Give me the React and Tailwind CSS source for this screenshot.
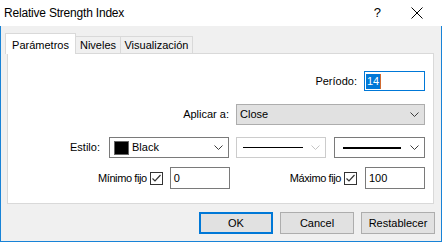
import React from "react";

function Chevron({ disabled }) {
  return (
    <svg width="9" height="6" viewBox="0 0 9 6" className="shrink-0">
      <path
        d="M0.5 0.5 L4.5 4.5 L8.5 0.5"
        fill="none"
        stroke={disabled ? "#c4c4c4" : "#3c3c3c"}
        strokeWidth="1"
      />
    </svg>
  );
}

function CheckBox() {
  return (
    <div className="w-[13px] h-[13px] border border-[#333333] bg-white flex items-center justify-center">
      <svg width="11" height="11" viewBox="0 0 11 11">
        <path d="M1.5 5.5 L4 8 L9.5 2" fill="none" stroke="#333333" strokeWidth="1.2" />
      </svg>
    </div>
  );
}

export default function App() {
  return (
    <div className="w-[442px] h-[242px] bg-[#f0f0f0] flex flex-col font-['Liberation_Sans',Arial,sans-serif] text-[11px] text-black">
      {/* title bar */}
      <div className="h-[26px] bg-white flex items-center shrink-0">
        <span className="pl-[4px] text-[12px] tracking-[-0.2px] text-black">Relative Strength Index</span>
        <span className="ml-auto mr-[30px] text-[13px]">?</span>
        <svg width="12" height="12" viewBox="0 0 12 12" className="mr-[19px]">
          <path d="M0.5 0.5 L11.5 11.5 M11.5 0.5 L0.5 11.5" stroke="#000" strokeWidth="1" />
        </svg>
      </div>

      {/* body */}
      <div className="flex-1 flex flex-col border-x border-b border-[#1883d7] pl-[6px] pr-[7px]">
        {/* tabs */}
        <div className="flex items-end h-[20px] mt-[7px] -ml-[2px]">
          <div className="h-[21px] w-[71px] -mb-px relative z-10 bg-white border-x border-t border-[#d9d9d9] flex items-start justify-center pt-[3px]">
            Parámetros
          </div>
          <div className="h-[17px] w-[46px] -ml-px bg-[#f0f0f0] border-t border-r border-[#d9d9d9] flex items-center justify-center pl-px">
            Niveles
          </div>
          <div className="h-[17px] w-[72px] bg-[#f0f0f0] border-t border-r border-[#d9d9d9] flex items-center justify-center">
            Visualización
          </div>
        </div>

        {/* panel */}
        <div className="h-[151px] bg-white border border-[#d9d9d9] flex flex-col pr-[8px]">
          <div className="flex items-center justify-end mt-[17px] gap-[7px]">
            <span>Período:</span>
            <div className="w-[61px] h-[20px] border border-[#0078d7] flex items-center pl-[1px]">
              <span className="bg-[#0078d7] text-white px-[1px] leading-[15px]">14</span>
              <span className="w-px h-[15px] bg-[#d06a30]"></span>
            </div>
          </div>

          <div className="flex items-center justify-end mt-[13px] gap-[7px]">
            <span>Aplicar a:</span>
            <div className="w-[189px] h-[21px] bg-[#e1e1e1] border border-[#adadad] flex items-center pl-[3px] pr-[5px]">
              <span>Close</span>
              <span className="ml-auto">
                <Chevron />
              </span>
            </div>
          </div>

          <div className="flex items-center justify-end mt-[12px]">
            <span className="mr-[9px]">Estilo:</span>
            <div className="w-[120px] h-[21px] border border-[#7a7a7a] flex items-center pl-[4px] pr-[5px]">
              <div className="w-[15px] h-[14px] bg-black border border-[#666666]"></div>
              <span className="ml-[3px]">Black</span>
              <span className="ml-auto">
                <Chevron />
              </span>
            </div>
            <div className="w-[90px] h-[21px] ml-[7px] border border-[#cccccc] flex items-center pl-[6px] pr-[5px]">
              <div className="w-[60px] h-px bg-black"></div>
              <span className="ml-auto">
                <Chevron disabled />
              </span>
            </div>
            <div className="w-[91px] h-[21px] ml-[8px] border border-[#7a7a7a] flex items-center pl-[8px] pr-[5px]">
              <div className="w-[58px] h-[2px] bg-black"></div>
              <span className="ml-auto">
                <Chevron />
              </span>
            </div>
          </div>

          <div className="flex items-center justify-end mt-[9px]">
            <span className="tracking-[-0.4px]">Mínimo fijo</span>
            <span className="ml-[3px]">
              <CheckBox />
            </span>
            <div className="w-[60px] h-[22px] ml-[7px] border border-[#7a7a7a] flex items-center pl-[3px]">0</div>
            <span className="ml-[60px] tracking-[-0.4px]">Máximo fijo</span>
            <span className="ml-[3px]">
              <CheckBox />
            </span>
            <div className="w-[60px] h-[22px] ml-[8px] border border-[#7a7a7a] flex items-center pl-[3px]">100</div>
          </div>
        </div>

        {/* buttons */}
        <div className="flex justify-end mt-[8px] gap-[7px] -mr-px">
          <button className="w-[74px] h-[22px] bg-[#e1e1e1] border-2 border-[#0078d7] flex items-center justify-center">
            OK
          </button>
          <button className="w-[74px] h-[22px] bg-[#e1e1e1] border border-[#adadad] flex items-center justify-center">
            Cancel
          </button>
          <button className="w-[74px] h-[22px] bg-[#e1e1e1] border border-[#adadad] flex items-center justify-center">
            Restablecer
          </button>
        </div>
      </div>
    </div>
  );
}
